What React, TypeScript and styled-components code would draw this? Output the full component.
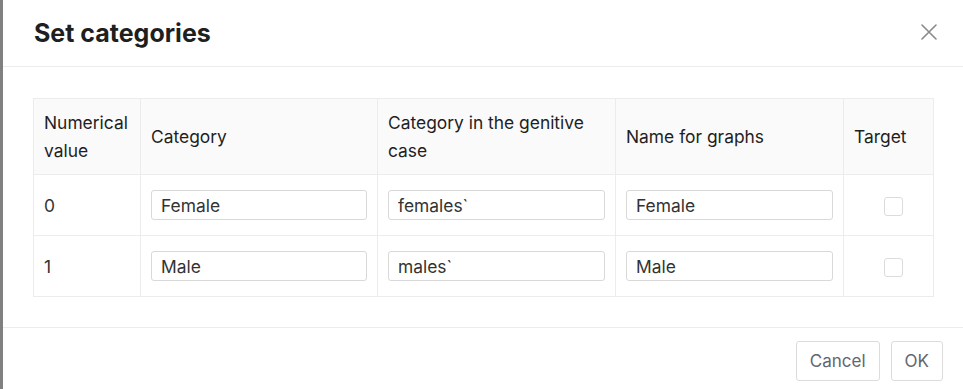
import React from "react";
import styled, { createGlobalStyle } from "styled-components";

const GlobalStyle = createGlobalStyle`
  html, body {
    margin: 0;
    padding: 0;
    height: 100%;
    overflow: hidden;
  }
  body {
    font-family: "Inter", "Noto Sans", sans-serif;
    color: #1f1f1f;
  }
`;

const Backdrop = styled.div`
  display: flex;
  width: 963px;
  height: 389px;
  background: #808080;
  padding-left: 3px;
  box-sizing: border-box;
`;

const Modal = styled.div`
  flex: 1;
  display: flex;
  flex-direction: column;
  background: #fff;
`;

const Header = styled.div`
  height: 67px;
  box-sizing: border-box;
  display: flex;
  align-items: center;
  justify-content: space-between;
  padding: 0 25px 0 31px;
  border-bottom: 1px solid #ececec;
`;

const Title = styled.h2`
  margin: 0;
  font-size: 25px;
  font-weight: 700;
  color: #1f1f1f;
`;

const Close = styled.button`
  background: transparent;
  border: none;
  padding: 0;
  width: 20px;
  height: 20px;
  display: flex;
  align-items: center;
  justify-content: center;
  cursor: pointer;
  margin-top: -3px;
`;

const Body = styled.div`
  padding: 31px 30px 30px 30px;
  border-bottom: 1px solid #ececec;
`;

const Table = styled.table`
  width: 100%;
  border-collapse: collapse;
  table-layout: fixed;
  border: 1px solid #ececec;
`;

const Th = styled.th<{ $w: number }>`
  width: ${(p) => p.$w}px;
  background: #fafafa;
  border: 1px solid #ececec;
  text-align: left;
  font-weight: 400;
  font-size: 17.4px;
  line-height: 28px;
  color: #1f1f1f;
  padding: 9px 8px 9px 10px;
  height: 76px;
  box-sizing: border-box;
`;

const Td = styled.td<{ $center?: boolean }>`
  border: 1px solid #ececec;
  font-size: 17.4px;
  color: #333;
  padding: 0 10px;
  height: 61px;
  box-sizing: border-box;
  text-align: ${(p) => (p.$center ? "center" : "left")};
`;

const Input = styled.input`
  display: block;
  width: 100%;
  height: 30px;
  box-sizing: border-box;
  border: 1px solid #d9d9d9;
  border-radius: 3px;
  padding: 0 9px;
  font-family: "Inter", "Noto Sans", sans-serif;
  font-size: 17.4px;
  color: #333;
  background: #fff;
  outline: none;
`;

const Check = styled.span`
  display: inline-block;
  width: 19px;
  height: 19px;
  box-sizing: border-box;
  border: 1px solid #dcdcdc;
  border-radius: 3px;
  background: #fff;
  vertical-align: middle;
  margin-left: 10px;
`;

const Footer = styled.div`
  flex: 1;
  display: flex;
  justify-content: flex-end;
  align-items: flex-start;
  gap: 11px;
  padding: 13px 21px 0 0;
`;

const Button = styled.button`
  height: 40px;
  padding: 0 13px;
  background: #fff;
  border: 1px solid #dcdcdc;
  border-radius: 3px;
  font-family: "Inter", "Noto Sans", sans-serif;
  font-size: 17px;
  color: #626670;
  cursor: pointer;
`;

const rows = [
  { value: "0", category: "Female", genitive: "females`", graph: "Female" },
  { value: "1", category: "Male", genitive: "males`", graph: "Male" },
];

const App = () => {
  return (
    <>
      <GlobalStyle />
      <Backdrop>
        <Modal>
          <Header>
            <Title>Set categories</Title>
            <Close aria-label="Close">
              <svg width="16" height="16" viewBox="0 0 16 16">
                <path d="M1 1L15 15M15 1L1 15" stroke="#8a8a8a" strokeWidth="1.6" strokeLinecap="round" />
              </svg>
            </Close>
          </Header>
          <Body>
            <Table>
              <thead>
                <tr>
                  <Th $w={107}>Numerical value</Th>
                  <Th $w={237}>Category</Th>
                  <Th $w={238}>Category in the genitive case</Th>
                  <Th $w={228}>Name for graphs</Th>
                  <Th $w={90}>Target</Th>
                </tr>
              </thead>
              <tbody>
                {rows.map((r) => (
                  <tr key={r.value}>
                    <Td>{r.value}</Td>
                    <Td>
                      <Input defaultValue={r.category} />
                    </Td>
                    <Td>
                      <Input defaultValue={r.genitive} />
                    </Td>
                    <Td>
                      <Input defaultValue={r.graph} />
                    </Td>
                    <Td $center>
                      <Check />
                    </Td>
                  </tr>
                ))}
              </tbody>
            </Table>
          </Body>
          <Footer>
            <Button>Cancel</Button>
            <Button>OK</Button>
          </Footer>
        </Modal>
      </Backdrop>
    </>
  );
};

export default App;
